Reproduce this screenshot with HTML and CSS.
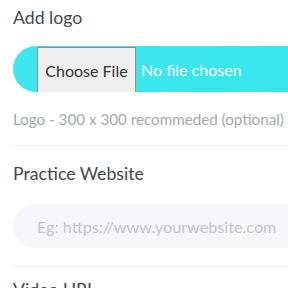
FILE: index.html
```html
<!DOCTYPE html>
<html>
<head>
<meta charset="utf-8">
<link rel="stylesheet" href="styles.css">
</head>
<body>
<div class="form">
  <section class="field">
    <label class="label">Add logo</label>
    <div class="file">
      <span class="file-btn">Choose File</span>
      <span class="file-name">No file chosen</span>
    </div>
    <p class="hint">Logo - 300 x 300 recommeded (optional)</p>
  </section>
  <section class="field">
    <label class="label">Practice Website</label>
    <div class="input">Eg: https://www.yourwebsite.com</div>
  </section>
  <section class="field last">
    <label class="label">Video URL</label>
  </section>
</div>
</body>
</html>
```
FILE: styles.css
```css
html, body {
  margin: 0;
  padding: 0;
  background: #fff;
  overflow: hidden;
  width: 288px;
  height: 288px;
}
.form {
  width: 330px;
  padding-left: 13px;
  font-family: "Lato", "Noto Sans", sans-serif;
}
.field {
  border-bottom: 1px solid #eef0f3;
}
.field.last {
  border-bottom: none;
}
.label {
  display: block;
  font-size: 17.7px;
  color: #43474d;
  line-height: 20px;
  padding-top: 8px;
}
.field + .field .label {
  padding-top: 18px;
}
.field.last .label {
  padding-top: 13px;
}
.file {
  margin-top: 18px;
  height: 46px;
  border-radius: 23px 0 0 23px;
  background: linear-gradient(90deg, #3ee6ee, #35e8ea);
  display: flex;
  align-items: stretch;
  padding-left: 24px;
}
.file-btn {
  width: 99px;
  box-sizing: border-box;
  margin: 1px 0 0 0;
  background: #efefef;
  border: 1px solid #8e8e8e;
  border-bottom: none;
  font-size: 16px;
  color: #333;
  display: flex;
  align-items: center;
  justify-content: center;
}
.file-name {
  display: flex;
  align-items: center;
  padding-left: 5px;
  color: #fff;
  font-size: 16px;
}
.hint {
  margin: 19px 0 0 0;
  font-size: 15.2px;
  line-height: 16px;
  color: #a4a8ae;
  padding-bottom: 18px;
  white-space: nowrap;
}
.input {
  margin: 20px 0 18px 0;
  height: 44px;
  border-radius: 22px 0 0 22px;
  background: #f7f7f9;
  display: flex;
  align-items: center;
  padding-left: 24px;
  font-size: 16.2px;
  color: #c3c5ca;
  white-space: nowrap;
}
```
